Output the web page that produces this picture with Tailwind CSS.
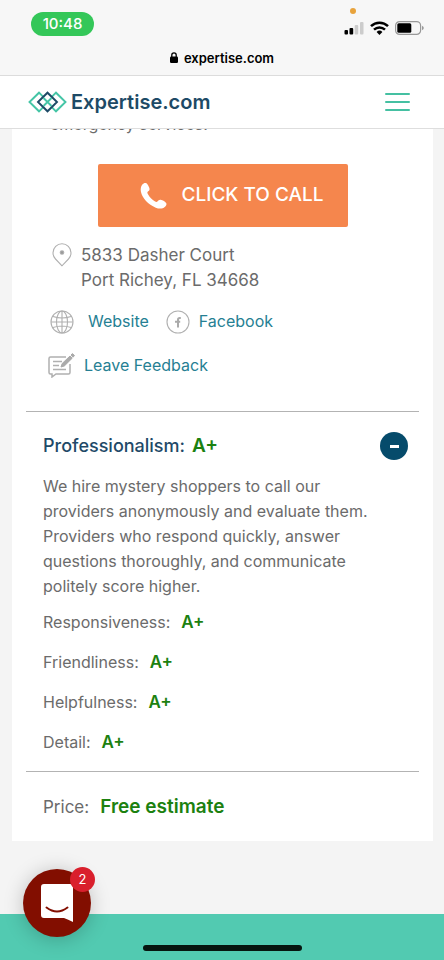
<!DOCTYPE html>
<html lang="en">
<head>
<meta charset="utf-8">
<meta name="viewport" content="width=device-width, initial-scale=1">
<title>Expertise.com</title>
<script src="https://cdn.jsdelivr.net/npm/@tailwindcss/browser@4"></script>
</head>
<body class="flex min-h-screen flex-col bg-[#f4f4f4] font-['Inter','Liberation_Sans',sans-serif] text-[#6b6b6b]">

<!-- Phone status bar and address -->
<div class="relative border-b border-[#dcdcdc] bg-[#f7f7f7] text-black">
  <div class="flex h-12 items-center justify-between pr-5 pl-[31px]">
    <span class="flex h-6 w-[63px] items-center justify-center rounded-full bg-[#34c759] text-[15px] font-medium text-white">10:48</span>
    <div class="flex items-center gap-[6px] pt-2">
      <svg class="h-[14px] w-5" viewBox="0 0 20 14" aria-hidden="true">
        <rect x="0.500" y="9" width="3.500" height="4.500" rx="1"/><rect x="5.500" y="7" width="3.700" height="6.500" rx="1"/>
        <rect x="10.700" y="4" width="3.500" height="9.500" rx="1" fill="#ccc"/><rect x="16" y="1" width="3.500" height="12.500" rx="1" fill="#ccc"/>
      </svg>
      <svg class="h-[14px] w-[19px]" viewBox="0 0 19 14" fill="none" stroke="#000" stroke-width="2.500" aria-hidden="true">
        <path d="M1 5.200a12.200 12.200 0 0 1 17 0M4 8.600a8 8 0 0 1 11 0"/><path d="M6.600 11a4.200 4.200 0 0 1 5.800 0L9.500 13.900z" fill="#000" stroke="none"/>
      </svg>
      <svg class="h-[14px] w-[29px]" viewBox="0 0 29 14" aria-hidden="true">
        <rect x=".6" y=".6" width="25" height="12.800" rx="4" fill="none" stroke="#999" stroke-width="1.200"/>
        <rect x="2.300" y="2.300" width="14" height="9.400" rx="1.500"/><path d="M27 4.700q1.800.8 1.800 2.300T27 9.300z" fill="#999"/>
      </svg>
    </div>
  </div>
  <span class="absolute top-2 right-[88px] size-[6px] rounded-full bg-[#e8a33c]"></span>
  <div class="flex h-[27px] items-center justify-center gap-[6px] pb-2 text-[13px] leading-5 font-semibold">
    <svg class="h-[11px] w-2" viewBox="0 0 8 11" aria-hidden="true"><rect y="4.500" width="8" height="6.500" rx="1.200"/><path d="M1.800 5V3a2.200 2.200 0 0 1 4.400 0v2" fill="none" stroke="#000" stroke-width="1.300"/></svg>
    expertise.com
  </div>
</div>

<header class="flex h-[53px] items-center justify-between border-b border-[#dedede] bg-white pr-[34px] pl-7">
  <a href="#" class="flex items-center gap-1 text-[20px] font-semibold text-[#1d4a66]">
    <svg class="h-[22px] w-[39px]" viewBox="0 0 39 22" fill="none" stroke-width="1.900" aria-hidden="true">
      <path d="M15.500 6.200 11 1.700 1.500 11 11 20.300l4.500-4.500M23.500 6.200 28 1.700 37.500 11 28 20.300l-4.500-4.500" stroke="#45c5a6"/>
      <path d="M10 11 19.500 1.700 29 11l-9.500 9.300z" stroke="#1d4a66"/>
      <path d="m15.500 7 8 8M23.500 7l-8 8" stroke="#45c5a6"/>
    </svg>
    Expertise.com
  </a>
  <button type="button" aria-label="Menu" class="flex w-[25px] flex-col gap-[6px]">
    <span class="h-[2px] w-full rounded-full bg-[#45c0a2]"></span><span class="h-[2px] w-full rounded-full bg-[#45c0a2]"></span><span class="h-[2px] w-full rounded-full bg-[#45c0a2]"></span>
  </button>
</header>

<main class="mr-[11px] ml-3 bg-white px-[14px] pb-[21px]">
  <div class="flex h-2 flex-col justify-end overflow-hidden pl-6 text-[16px] leading-[25px]"><p>emergency services.</p></div>
  <a href="#" class="mx-auto mt-[27px] flex h-[63px] w-[250px] items-center justify-center gap-[14px] rounded-[2px] bg-[#f5864d] pl-[18px] text-[19px] font-medium text-white">
    <svg class="size-7" viewBox="0 0 30 30" fill="#fff" aria-hidden="true"><path d="M2.500 2.800C3.500 1.600 5 .8 6.300 1.200c1.600.5 3.500 4 3.900 6 .3 1.500-.7 2.300-1.700 3.100-.8.700-.7 1.500-.1 2.600 1.700 3.200 4.500 6.100 7.800 8 1.100.6 2 .6 2.700-.2.800-1 1.700-2 3.200-1.700 2.200.4 5.400 2.200 6.100 3.700.6 1.300-.4 3-1.700 4.100-2.100 1.900-5.900 2.200-9.600.7C8.800 24.300 2.400 17.400 1 10.500.4 7.500.9 4.700 2.500 2.800z"/></svg>
    CLICK TO CALL
  </a>

  <address class="mt-4 flex gap-[9px] pl-[26px] text-[17px] leading-[25px] not-italic">
    <svg class="h-6 w-5" viewBox="0 0 20 24" fill="none" stroke="#b0b0b0" stroke-width="1.100" aria-hidden="true"><path d="M10 22.800 3.500 16A9 9 0 1 1 16.500 16z"/><circle cx="10" cy="9.500" r="1.800" fill="#999"/></svg>
    <span>5833 Dasher Court<br>Port Richey, FL 34668</span>
  </address>

  <div class="mt-4 flex items-center pl-6 text-[16px] leading-[25px] text-[#267f93]">
    <a href="#" class="flex items-center gap-[14px]">
      <svg class="size-6" viewBox="0 0 24 24" fill="none" stroke="#b0b0b0" stroke-width="1.100" aria-hidden="true"><circle cx="12" cy="12" r="11"/><ellipse cx="12" cy="12" rx="5.500" ry="11"/><path d="M12 1v22M1 12h22M3 6.500q9 3 18 0M3 17.500q9-3 18 0"/></svg>
      Website
    </a>
    <a href="#" class="ml-[17px] flex items-center gap-[9px]">
      <svg class="size-6" viewBox="0 0 24 24" fill="none" stroke="#b0b0b0" stroke-width="1.100" aria-hidden="true"><circle cx="12" cy="12" r="11"/><path d="M14.800 8h-1q-1.800 0-1.800 1.800v7.700M9 11.800h5.200" stroke="#aaa" stroke-width="2"/></svg>
      Facebook
    </a>
  </div>

  <a href="#" class="mt-[18px] flex items-center gap-[9px] pl-[22px] text-[16px] leading-[25px] text-[#267f93]">
    <svg class="h-[26px] w-[27px]" viewBox="0 0 27 26" fill="none" stroke="#b0b0b0" stroke-width="1.500" aria-hidden="true"><path d="M18 5H2.500Q1 5 1 6.500v14Q1 22 2.500 22H4v3l4-3h12.500q1.500 0 1.500-1.500V12M5 9.500h9M5 13.500h6M5 17.500h13"/><path d="m13 15 1.200-3.500L22 4l2.200 2.200-7.800 7.700zM23 3l1.500-1.400 2 2L25 5.200z" fill="#aaa" stroke="#aaa" stroke-width="1"/></svg>
    Leave Feedback
  </a>

  <section class="mt-[33px] border-t border-[#b3b3b3] px-[17px] pt-5">
    <div class="flex items-center justify-between">
      <h2 class="flex items-center gap-[7px] text-[18px] leading-7 font-medium text-[#1f4a68]">Professionalism: <span class="text-[19px] font-semibold text-[#1c8110]">A+</span></h2>
      <button type="button" aria-label="Collapse Professionalism" class="-mr-[6px] flex size-7 items-center justify-center rounded-full bg-[#064b6b]"><span class="h-[3px] w-[9px] bg-white"></span></button>
    </div>
    <p class="mt-[14px] text-[16px] leading-[25px]">We hire mystery shoppers to call our<br>providers anonymously and evaluate them.<br>Providers who respond quickly, answer<br>questions thoroughly, and communicate<br>politely score higher.</p>
    <dl class="mt-[11px] flex flex-col gap-4 text-[16px] leading-6">
      <div class="flex items-center gap-[11px]"><dt>Responsiveness:</dt><dd class="text-[17px] font-semibold text-[#1c8110]">A+</dd></div>
      <div class="flex items-center gap-[11px]"><dt>Friendliness:</dt><dd class="text-[17px] font-semibold text-[#1c8110]">A+</dd></div>
      <div class="flex items-center gap-[11px]"><dt>Helpfulness:</dt><dd class="text-[17px] font-semibold text-[#1c8110]">A+</dd></div>
      <div class="flex items-center gap-[11px]"><dt>Detail:</dt><dd class="text-[17px] font-semibold text-[#1c8110]">A+</dd></div>
    </dl>
  </section>

  <section class="mt-[17px] flex items-center gap-[11px] border-t border-[#b3b3b3] px-[17px] pt-[22px] text-[17px] leading-[26px]">
    <span>Price:</span><strong class="text-[19px] font-semibold text-[#1c8110]">Free estimate</strong>
  </section>
</main>

<footer class="mt-auto flex h-[46px] items-end justify-center bg-[#52cab1] pb-[9px]">
  <span class="h-[6px] w-[159px] rounded-full bg-[#06150f]"></span>
</footer>

<button type="button" aria-label="Open chat, 2 unread messages" class="fixed bottom-[23px] left-[23px] flex size-[68px] items-center justify-center rounded-full bg-[#820e00] shadow-[0_2px_20px_rgba(0,0,0,0.22)]">
  <svg class="h-[38px] w-8" viewBox="0 0 32 38" aria-hidden="true"><path d="M3 0h26q3 0 3 3v35q-5-2.500-9-4H3q-3 0-3-3V3Q0 0 3 0z" fill="#fff"/><path d="M5.500 23.500q10.500 8 21 0" fill="none" stroke="#820e00" stroke-width="2" stroke-linecap="round"/></svg>
  <span class="absolute -top-[2px] -right-1 flex size-[25px] items-center justify-center rounded-full bg-[#d91f2c] text-[13px] text-white">2</span>
</button>
</body>
</html>
